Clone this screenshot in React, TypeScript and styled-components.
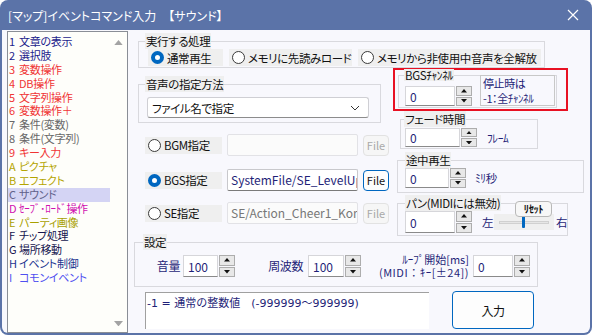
import React from "react";
import styled, { createGlobalStyle } from "styled-components";

const GlobalStyle = createGlobalStyle`
  body {
    margin: 0;
    font-family: "Noto Sans CJK JP", "Noto Sans", sans-serif;
    font-feature-settings: "palt";
    font-size: 11px;
    letter-spacing: -0.4px;
    color: #111;
  }
`;

const NAVY = "#1f1f78";
const BLUE = "#0067c0";

const commandos = [
  { key: "1", text: "文章の表示", color: "#1c1c8c" },
  { key: "2", text: "選択肢", color: "#1c1c8c" },
  { key: "3", text: "変数操作", color: "#f03434" },
  { key: "4", text: "DB操作", color: "#f03434" },
  { key: "5", text: "文字列操作", color: "#f03434" },
  { key: "6", text: "変数操作＋", color: "#f03434" },
  { key: "7", text: "条件(変数)", color: "#686868" },
  { key: "8", text: "条件(文字列)", color: "#686868" },
  { key: "9", text: "キー入力", color: "#f03434" },
  { key: "A", text: "ピクチャ", color: "#b4a400" },
  { key: "B", text: "エフェクト", color: "#b4a400" },
  { key: "C", text: "サウンド", color: "#62628a", sel: true },
  { key: "D", text: "ｾｰﾌﾞ･ﾛｰﾄﾞ操作", color: "#d010b0" },
  { key: "E", text: "パーティ画像", color: "#a8a000" },
  { key: "F", text: "チップ処理", color: "#14144e" },
  { key: "G", text: "場所移動", color: "#14144e" },
  { key: "H", text: "イベント制御", color: "#1c3490" },
  { key: "I", text: "コモンイベント", color: "#5050f0" },
];

//====////==== COMPONENTES ====\\\\====\\
const Triangulo = ({ down, color = "#111", size = 6 }: { down?: boolean; color?: string; size?: number }) => (
  <svg width={size} height={size * 0.6} viewBox="0 0 10 6">
    <polygon points={down ? "0,0 10,0 5,6" : "0,6 10,6 5,0"} fill={color} />
  </svg>
);

const Radio = ({ checked, w, children }: { checked?: boolean; w?: number; children: React.ReactNode }) => (
  <RadioBox $w={w}>
    <Circulo $checked={checked} />
    <span>{children}</span>
  </RadioBox>
);

const Spinner = ({ value, w, h = 21 }: { value: string; w: number; h?: number }) => (
  <SpinBox style={{ width: w, height: h }}>
    <SpinInput>{value}</SpinInput>
    <SpinBtns>
      <SpinBtn>
        <Triangulo />
      </SpinBtn>
      <SpinBtn>
        <Triangulo down />
      </SpinBtn>
    </SpinBtns>
  </SpinBox>
);

const FileRow = ({ label, value, checked, mt, active }: { label: string; value: string; checked?: boolean; mt: number; active?: boolean }) => (
  <Fila $mt={mt}>
    <Radio checked={checked} w={77}>
      {label}
    </Radio>
    <FileInput $active={active}>{value}</FileInput>
    <FileBtn $active={active}>File</FileBtn>
  </Fila>
);

const App = () => {
  return (
    <>
      <GlobalStyle />
      <Ventana>
        <Titulo>
          <span>[マップ]イベントコマンド入力　【サウンド】</span>
          <svg width="12" height="12" viewBox="0 0 12 12">
            <path d="M1 1 L11 11 M11 1 L1 11" stroke="#fff" strokeWidth="1.2" />
          </svg>
        </Titulo>
        <Cuerpo>
          <Lista>
            <Items>
              {commandos.map((c) => (
                <Item key={c.key} $color={c.color} $sel={c.sel}>
                  <Clave>{c.key}</Clave>
                  {c.text}
                </Item>
              ))}
            </Items>
            <Scroll>
              <Triangulo color="#a3a3a3" size={9} />
              <Triangulo down color="#a3a3a3" size={9} />
            </Scroll>
          </Lista>

          <Principal>
            <Grupo $w={407} $ml={4} $mt={2}>
              <Leyenda $ml={6}>実行する処理</Leyenda>
              <RadioFila>
                <Radio checked w={75}>
                  通常再生
                </Radio>
                <Radio w={123}>メモリに先読みロード</Radio>
                <Radio>メモリから非使用中音声を全解放</Radio>
              </RadioFila>
            </Grupo>

            <Medio>
              <ColIzq>
                <Grupo $w={243} $mt={8}>
                  <Leyenda $ml={6}>音声の指定方法</Leyenda>
                  <Select>
                    <span>ファイル名で指定</span>
                    <svg width="10" height="6" viewBox="0 0 10 6">
                      <path d="M1 1 L5 5 L9 1" stroke="#333" fill="none" strokeWidth="1" />
                    </svg>
                  </Select>
                </Grupo>
                <FileRow label="BGM指定" value="" mt={11} />
                <FileRow label="BGS指定" value="SystemFile/SE_LevelUp" checked active mt={13} />
                <FileRow label="SE指定" value="SE/Action_Cheer1_Kor" mt={11} />
              </ColIzq>

              <ColDer>
                <CajaRoja>
                  <Grupo $w={159} $ml={3} $mt={-1}>
                    <Leyenda $ml={5} $lh={12}>BGSﾁｬﾝﾈﾙ</Leyenda>
                    <Contenido $pt={5} $pl={6} $pb={1}>
                      <Spinner value="0" w={67} h={20} />
                    </Contenido>
                  </Grupo>
                  <Info>
                    <div>停止時は</div>
                    <div>-1：全ﾁｬﾝﾈﾙ</div>
                  </Info>
                </CajaRoja>

                <Grupo $w={138} $ml={7}>
                  <Leyenda $ml={3}>フェード時間</Leyenda>
                  <Contenido $pt={1} $pl={4} $pb={1}>
                    <Spinner value="0" w={72} h={19} />
                    <Unidad $ml={10}>ﾌﾚｰﾑ</Unidad>
                  </Contenido>
                </Grupo>

                <Grupo $w={187} $ml={4} $mt={3}>
                  <Leyenda $ml={7}>途中再生</Leyenda>
                  <Contenido $pt={0} $pl={7} $pb={4}>
                    <Spinner value="0" w={61} h={20} />
                    <Unidad $ml={9}>ﾐﾘ秒</Unidad>
                  </Contenido>
                </Grupo>

                <PanCaja>
                  <Grupo $w={171}>
                    <Leyenda $ml={7}>パン(MIDIには無効)</Leyenda>
                    <Contenido $pt={0} $pl={7} $pb={2}>
                      <Spinner value="0" w={67} h={22} />
                      <Unidad $ml={10}>左</Unidad>
                      <Slider>
                        <Pista />
                        <Pulgar />
                      </Slider>
                      <Unidad $ml={0}>右</Unidad>
                    </Contenido>
                  </Grupo>
                  <Reset>ﾘｾｯﾄ</Reset>
                </PanCaja>
              </ColDer>
            </Medio>

            <Grupo $w={404} $mt={-2}>
              <Leyenda $ml={8}>設定</Leyenda>
              <Contenido $pt={3} $pl={0} $pb={7}>
                <Etiqueta $w={45} $mr={3}>音量</Etiqueta>
                <Spinner value="100" w={52} h={22} />
                <Etiqueta $w={68} $mr={5}>周波数</Etiqueta>
                <Spinner value="100" w={53} h={22} />
                <Etiqueta $w={108} $mr={4} $dos>
                  <div>ﾙｰﾌﾟ開始[ms]</div>
                  <Ancho>(MIDI：ｷｰ[±24])</Ancho>
                </Etiqueta>
                <Spinner value="0" w={57} h={22} />
              </Contenido>
            </Grupo>

            <FilaInferior>
              <Texto>-1 = 通常の整数値　(-999999～999999)</Texto>
              <BotonInput>入力</BotonInput>
            </FilaInferior>
          </Principal>
        </Cuerpo>
      </Ventana>
    </>
  );
};

//====////==== ESTILOS ====\\\\====\\
const Ventana = styled.div`
  width: 592px;
  height: 335px;
  background: #5b73a8;
  border-radius: 8px;
  overflow: hidden;
  display: flex;
  flex-direction: column;
`;

const Titulo = styled.div`
  height: 30px;
  display: flex;
  align-items: center;
  justify-content: space-between;
  padding: 0 13px 0 8px;
  color: #fff;
  font-size: 12px;
  letter-spacing: 0;
`;

const Cuerpo = styled.div`
  flex: 1;
  margin: 0 2px 2px 2px;
  padding: 1px 0 0 5px;
  background: #f8f8fd;
  border-radius: 0 0 6px 6px;
  display: flex;
`;

const Lista = styled.div`
  width: 121px;
  height: 302px;
  box-sizing: border-box;
  border: 1px solid #8a8e96;
  background: #fefefa;
  display: flex;
`;

const Items = styled.div`
  flex: 1;
  padding: 3px 0 0 0;
`;

const Item = styled.div<{ $color: string; $sel?: boolean }>`
  display: flex;
  height: 13.9px;
  line-height: 13.9px;
  font-size: 11px;
  letter-spacing: -0.3px;
  padding-left: 1px;
  white-space: nowrap;
  color: ${(p) => p.$color};
  background: ${(p) => (p.$sel ? "#d4d4f4" : "transparent")};
`;

const Clave = styled.span`
  width: 10px;
`;

const Scroll = styled.div`
  width: 17px;
  display: flex;
  flex-direction: column;
  justify-content: space-between;
  align-items: center;
  padding: 8px 0 6px;
`;

const Principal = styled.div`
  margin-left: 6px;
  display: flex;
  flex-direction: column;
`;

const Grupo = styled.fieldset<{ $w: number; $ml?: number; $mt?: number }>`
  width: ${(p) => p.$w}px;
  margin: ${(p) => p.$mt ?? 0}px 0 0 ${(p) => p.$ml ?? 0}px;
  box-sizing: border-box;
  border: 1px solid #d9d9de;
  padding: 0;
  min-width: 0;
`;

const Leyenda = styled.legend<{ $ml: number; $lh?: number }>`
  margin-left: ${(p) => p.$ml}px;
  padding: 0 1px;
  background: #efefef;
  line-height: ${(p) => p.$lh ?? 16}px;
  font-size: 11.5px;
  color: #111;
`;

const Contenido = styled.div<{ $pt: number; $pl: number; $pb: number }>`
  display: flex;
  align-items: center;
  padding: ${(p) => p.$pt}px 0 ${(p) => p.$pb}px ${(p) => p.$pl}px;
`;

const RadioFila = styled.div`
  display: flex;
  gap: 6px;
  padding: 0 0 1px 9px;
`;

const RadioBox = styled.div<{ $w?: number }>`
  display: flex;
  align-items: center;
  gap: 3px;
  height: 17px;
  padding: 0 4px 0 3px;
  background: #efefef;
  white-space: nowrap;
  font-size: 11.5px;
  ${(p) => (p.$w ? `width: ${p.$w}px; box-sizing: border-box;` : "")}
`;

const Circulo = styled.span<{ $checked?: boolean }>`
  width: 13px;
  height: 13px;
  box-sizing: border-box;
  border-radius: 50%;
  flex-shrink: 0;
  border: ${(p) => (p.$checked ? `4px solid ${BLUE}` : "1px solid #3a3a3a")};
  background: #fff;
`;

const Medio = styled.div`
  display: flex;
`;

const ColIzq = styled.div`
  width: 255px;
  padding-left: 4px;
  box-sizing: border-box;
  display: flex;
  flex-direction: column;
`;

const ColDer = styled.div`
  margin-left: 4px;
  display: flex;
  flex-direction: column;
`;

const Select = styled.div`
  margin: 5px 0 4px 8px;
  width: 222px;
  height: 21px;
  box-sizing: border-box;
  border: 1px solid #cfcfd4;
  border-bottom-color: #8c8c8c;
  border-radius: 3px;
  background: #fff;
  display: flex;
  align-items: center;
  justify-content: space-between;
  padding: 0 8px 0 4px;
  font-size: 11.5px;
`;

const Fila = styled.div<{ $mt: number }>`
  margin: ${(p) => p.$mt}px 0 0 7px;
  display: flex;
  align-items: center;
  gap: 5px;
`;

const FileInput = styled.div<{ $active?: boolean }>`
  width: 131px;
  height: 22px;
  box-sizing: border-box;
  border: 1px solid ${(p) => (p.$active ? "#c8c8cc" : "#e2e2e6")};
  border-bottom-color: ${(p) => (p.$active ? "#7a7a7a" : "#e2e2e6")};
  border-radius: 2px;
  background: ${(p) => (p.$active ? "#fff" : "#fbfbfb")};
  color: ${(p) => (p.$active ? NAVY : "#777")};
  font-size: 12px;
  letter-spacing: 0;
  line-height: 20px;
  padding-left: 3px;
  white-space: nowrap;
  overflow: hidden;
`;

const FileBtn = styled.div<{ $active?: boolean }>`
  width: 26px;
  height: 21px;
  box-sizing: border-box;
  border: ${(p) => (p.$active ? `1.5px solid ${BLUE}` : "1px solid #e2e2e2")};
  border-radius: 4px;
  background: ${(p) => (p.$active ? "#fdfdfd" : "#f6f6f6")};
  color: ${(p) => (p.$active ? "#111" : "#a8a8a8")};
  font-size: 11px;
  letter-spacing: 0;
  display: flex;
  align-items: center;
  justify-content: center;
`;

const CajaRoja = styled.div`
  position: relative;
  width: 175px;
  height: 43px;
  box-sizing: border-box;
  border: 2px solid #e81123;
`;

const Info = styled.div`
  position: absolute;
  left: 85px;
  top: 5px;
  width: 75px;
  height: 31px;
  box-sizing: border-box;
  border: 1px solid #c8c8c8;
  background: #f8f8fd;
  color: ${NAVY};
  font-size: 11px;
  line-height: 15px;
  padding: 0 0 0 2px;
`;

const PanCaja = styled.div`
  position: relative;
  margin: 2px 0 0 4px;
`;

const SpinBox = styled.div`
  display: flex;
  gap: 1px;
  flex-shrink: 0;
`;

const SpinInput = styled.div`
  flex: 1;
  box-sizing: border-box;
  border: 1px solid #d6d6da;
  border-bottom-color: #8a8a8a;
  background: #fff;
  color: ${NAVY};
  font-size: 12px;
  letter-spacing: 0;
  display: flex;
  align-items: center;
  padding-left: 4px;
`;

const SpinBtns = styled.div`
  width: 16px;
  display: flex;
  flex-direction: column;
  gap: 1px;
`;

const SpinBtn = styled.div`
  flex: 1;
  box-sizing: border-box;
  border: 1px solid #adadad;
  background: #e8e8e8;
  display: flex;
  align-items: center;
  justify-content: center;
`;

const Unidad = styled.span<{ $ml: number }>`
  margin-left: ${(p) => p.$ml}px;
  color: ${NAVY};
  font-size: 11.5px;
`;

const Reset = styled.div`
  position: absolute;
  left: 118px;
  top: 6px;
  width: 37px;
  height: 16px;
  box-sizing: border-box;
  border: 1px solid #b8b8b8;
  border-radius: 4px;
  background: #f7f7f7;
  font-size: 10.5px;
  font-weight: bold;
  line-height: 14px;
  text-align: center;
  color: #111;
`;

const Slider = styled.div`
  position: relative;
  width: 60px;
  height: 16px;
  margin: 0 2px 0 1px;
  background: #efefef;
  display: flex;
  align-items: center;
  justify-content: center;
`;

const Pista = styled.div`
  width: 50px;
  height: 3px;
  box-sizing: border-box;
  border: 1px solid #d0d0d0;
  background: #e6e6e6;
`;

const Pulgar = styled.div`
  position: absolute;
  left: 28px;
  top: 2px;
  width: 3px;
  height: 12px;
  background: ${BLUE};
  border-radius: 1px;
`;

const Etiqueta = styled.div<{ $w: number; $mr: number; $dos?: boolean }>`
  width: ${(p) => p.$w}px;
  margin-right: ${(p) => p.$mr}px;
  text-align: right;
  color: ${NAVY};
  font-size: ${(p) => (p.$dos ? 11 : 12)}px;
  line-height: ${(p) => (p.$dos ? 13 : 16)}px;
  letter-spacing: ${(p) => (p.$dos ? "0" : "-0.4px")};
  white-space: pre;
`;

const Ancho = styled.div`
  font-feature-settings: normal;
  letter-spacing: 0.5px;
`;

const FilaInferior = styled.div`
  margin-top: 5px;
  display: flex;
  align-items: flex-start;
`;

const Texto = styled.div`
  margin-left: 11px;
  width: 284px;
  height: 37px;
  box-sizing: border-box;
  border-top: 1px solid #a0a0a0;
  border-left: 1px solid #a0a0a0;
  background: #fff;
  color: ${NAVY};
  font-family: "DejaVu Sans", "Noto Sans CJK JP", sans-serif;
  font-size: 11px;
  font-feature-settings: normal;
  letter-spacing: 0;
  padding: 1px 0 0 1px;
  white-space: pre;
`;

const BotonInput = styled.div`
  margin: -1px 0 0 23px;
  width: 82px;
  height: 38px;
  box-sizing: border-box;
  border: 1.5px solid ${BLUE};
  border-radius: 4px;
  background: #fdfdfd;
  font-size: 12px;
  display: flex;
  align-items: center;
  justify-content: center;
`;

export default App;
